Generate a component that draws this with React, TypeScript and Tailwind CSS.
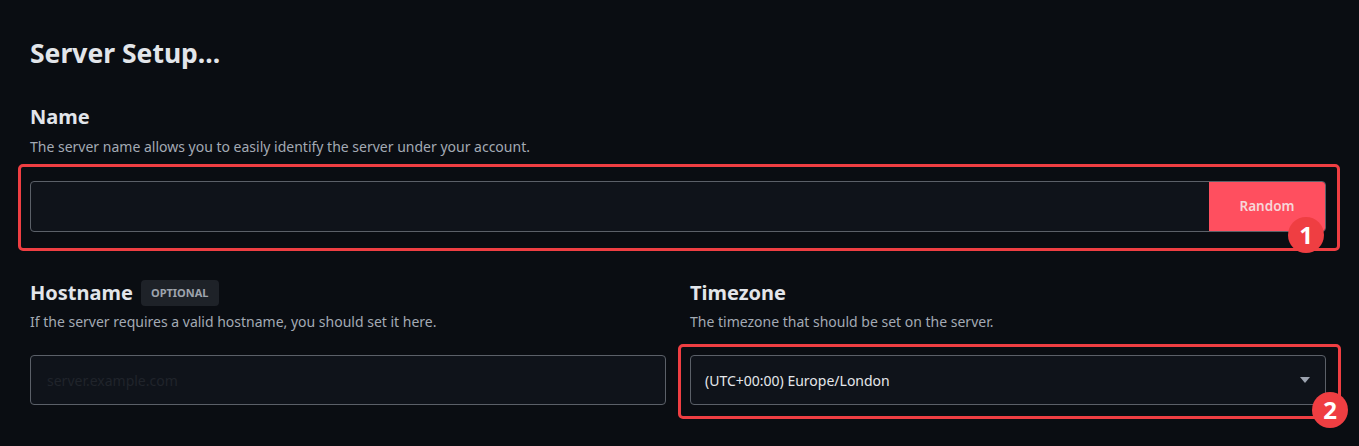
export default function App() {
  return (
    <div
      className="min-h-[446px] w-full bg-[#0a0d12] text-[#e5e7eb]"
      style={{ fontFamily: '"Noto Sans", "Open Sans", sans-serif' }}
    >
      <div className="ml-[30px] w-[1296px] pt-[33px]">
        <h1 className="text-[26.5px] font-bold leading-[40px] text-[#e2e5ea]">Server Setup...</h1>

        {/* Name */}
        <div className="mt-[30px]">
          <h2 className="text-[20px] font-bold leading-[28px] text-[#e2e5ea]">Name</h2>
          <p className="mt-[6px] text-[14px] leading-[20px] text-[#a3aab4]">
            The server name allows you to easily identify the server under your account.
          </p>
          <div className="relative mt-[24px]">
            <div className="pointer-events-none absolute -top-[17px] -left-[12px] -right-[14px] -bottom-[19px] rounded-[5px] border-[3px] border-[#ef3e42]" />
            <div className="flex h-[51px] overflow-hidden rounded-[4px] border border-[#5b6068] bg-[#0f131a]">
              <input className="flex-1 bg-transparent px-4 text-sm text-[#e5e7eb] outline-none" />
              <button className="w-[116px] bg-[#ff4f5f] text-[13.5px] font-semibold text-[#f7d6d9]">Random</button>
            </div>
            <div className="absolute right-[2px] top-[36px] flex h-[36px] w-[36px] items-center justify-center rounded-full bg-[#ef3e42] text-[24px] font-bold text-white">
              1
            </div>
          </div>
        </div>

        {/* Hostname / Timezone */}
        <div className="mt-[47px] grid grid-cols-2 gap-6">
          <div>
            <div className="flex h-[28px] items-center gap-2">
              <h2 className="text-[20px] font-bold leading-[28px] text-[#e2e5ea]">Hostname</h2>
              <span className="rounded-[4px] bg-[#1e2228] px-[10px] py-[5px] text-[11px] font-bold leading-[16px] text-[#9ea4ad]">
                OPTIONAL
              </span>
            </div>
            <p className="mt-[5px] text-[14px] leading-[20px] text-[#a3aab4]">
              If the server requires a valid hostname, you should set it here.
            </p>
            <div className="mt-[23px] flex h-[50px] items-center rounded-[4px] border border-[#5b6068] bg-[#0f131a] px-[16px]">
              <input
                placeholder="server.example.com"
                className="w-full bg-transparent text-[14px] text-[#e5e7eb] outline-none placeholder:text-[#20242b]"
              />
            </div>
          </div>

          <div>
            <h2 className="text-[20px] font-bold leading-[28px] text-[#e2e5ea]">Timezone</h2>
            <p className="mt-[5px] text-[14px] leading-[20px] text-[#a3aab4]">
              The timezone that should be set on the server.
            </p>
            <div className="relative mt-[23px]">
              <div className="pointer-events-none absolute -top-[11px] -left-[12px] -right-[15px] -bottom-[14px] rounded-[5px] border-[3px] border-[#ef3e42]" />
              <div className="flex h-[50px] items-center justify-between rounded-[4px] border border-[#5b6068] bg-[#0f131a] pl-[14px] pr-[15px]">
                <span className="text-[14px] text-[#e5e7eb]">(UTC+00:00) Europe/London</span>
                <svg width="10" height="6" viewBox="0 0 10 6">
                  <path d="M0 0 L10 0 L5 6 Z" fill="#9ca3af" />
                </svg>
              </div>
              <div className="absolute -right-[22px] top-[37px] flex h-[36px] w-[36px] items-center justify-center rounded-full bg-[#ef3e42] text-[24px] font-bold text-white">
                2
              </div>
            </div>
          </div>
        </div>
      </div>
    </div>
  )
}
